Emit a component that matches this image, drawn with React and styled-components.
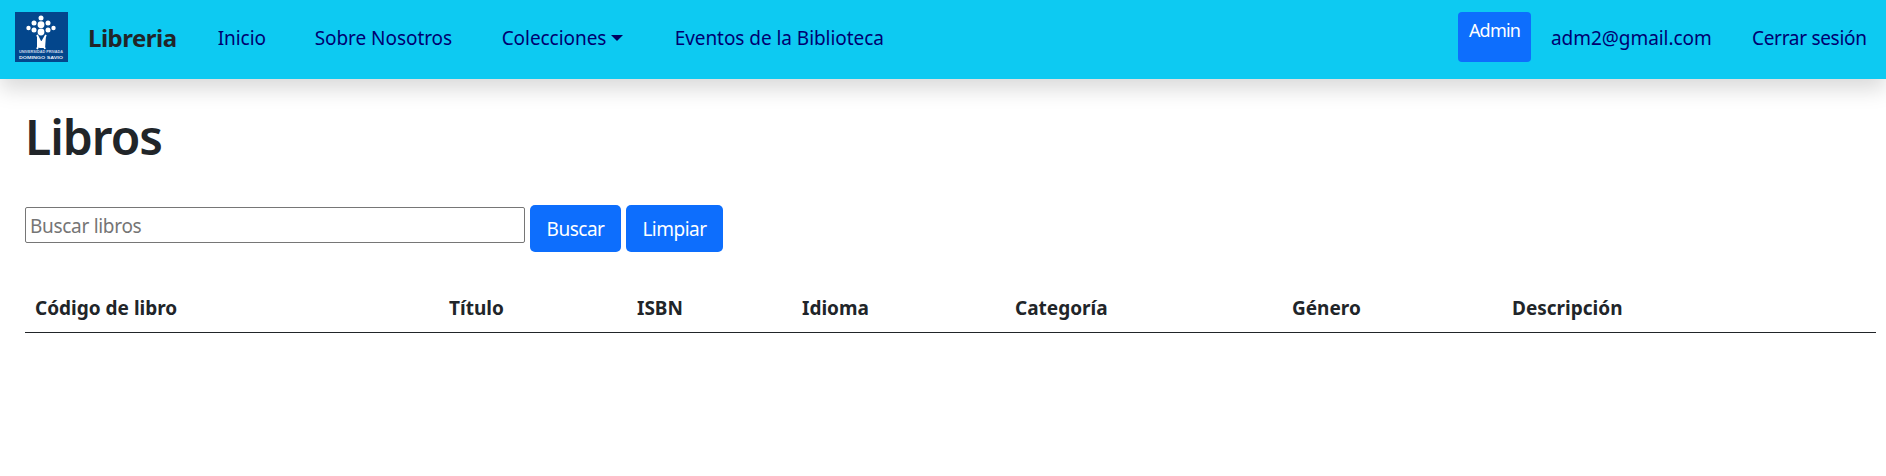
import React from "react";
import styled, { createGlobalStyle } from "styled-components";

const GlobalStyle = createGlobalStyle`
  * { box-sizing: border-box; }
  body {
    margin: 0;
    background: #fff;
    color: #212529;
    font-family: "Noto Sans", "Open Sans", sans-serif;
    font-size: 19px;
    overflow: hidden;
  }
`;

const Navbar = styled.nav`
  display: flex;
  align-items: center;
  height: 79px;
  padding: 0 17px 5px 15px;
  background: #0dcaf2;
  box-shadow: 0 10px 20px rgba(0, 0, 0, 0.15);
`;
const Logo = styled.svg`
  display: block;
  width: 53px;
  height: 50px;
  flex: none;
`;
const Brand = styled.a`
  margin-left: 20px;
  font-size: 24px;
  font-weight: 700;
  letter-spacing: -0.5px;
  color: #212529;
`;
const Links = styled.div`
  display: flex;
  align-items: center;
  margin-left: 41px;
`;
const NavLink = styled.a`
  width: ${(p) => p.$width}px;
  flex: none;
  padding-top: 1px;
  color: #000070;
  font-size: 19px;
  letter-spacing: -0.05px;
  white-space: nowrap;
`;
const Caret = styled.span`
  display: inline-block;
  margin-left: 5px;
  vertical-align: 4px;
  border-top: 6px solid #000060;
  border-left: 6px solid transparent;
  border-right: 6px solid transparent;
`;
const UserArea = styled.div`
  display: flex;
  align-items: center;
  margin-left: auto;
`;
const RoleBadge = styled.span`
  display: block;
  width: 73px;
  height: 50px;
  padding-top: 6px;
  border-radius: 4px;
  background: #0d6efd;
  color: #fff;
  font-size: 18px;
  letter-spacing: -0.8px;
  text-align: center;
`;
const Email = styled(NavLink)`
  margin-left: 20px;
`;
const Logout = styled(NavLink)`
  letter-spacing: -0.3px;
`;
const Main = styled.main`
  padding: 0 10px 0 25px;
`;
const Title = styled.h1`
  margin: 28px 0 0;
  height: 59px;
  font-size: 48px;
  font-weight: 600;
  line-height: 59px;
  letter-spacing: -1px;
`;
const SearchRow = styled.form`
  display: flex;
  align-items: center;
  gap: 5px;
  margin-top: 39px;
`;
const SearchInput = styled.input`
  width: 500px;
  height: 36px;
  margin-top: -8px;
  padding: 2px 4px 0;
  border: 1px solid #767676;
  border-radius: 2px;
  font: inherit;
  font-size: 19px;
  letter-spacing: -0.3px;
  &::placeholder { color: #757575; opacity: 1; }
`;
const Button = styled.button`
  width: ${(p) => p.$width}px;
  height: 47px;
  padding: 0;
  border: 0;
  border-radius: 5px;
  background: #0d6efd;
  color: #fff;
  font: inherit;
  font-size: 19px;
  letter-spacing: -0.5px;
`;
const Table = styled.table`
  width: 100%;
  margin-top: 32px;
  border-collapse: collapse;
  table-layout: fixed;
`;
const HeadCell = styled.th`
  width: ${(p) => p.$width}px;
  height: 48px;
  padding: 0 10px;
  border-bottom: 1px solid #212529;
  font-size: 19px;
  font-weight: 700;
  letter-spacing: 0;
  text-align: left;
`;

const columns = [
  ["Código de libro", 414],
  ["Título", 188],
  ["ISBN", 165],
  ["Idioma", 213],
  ["Categoría", 277],
  ["Género", 220],
  ["Descripción", 374],
];

const SchoolLogo = () => (
  <Logo viewBox="0 0 53 50">
    <rect width="53" height="50" fill="#03468c" />
    <g fill="#fff">
      <circle cx="26" cy="6" r="2.5" />
      <circle cx="19" cy="11" r="2.5" />
      <circle cx="26" cy="12.7" r="3.4" />
      <circle cx="33" cy="11" r="2.5" />
      <circle cx="13.5" cy="16" r="2.2" />
      <circle cx="19" cy="18" r="2.5" />
      <circle cx="33" cy="18" r="2.5" />
      <circle cx="38.5" cy="16" r="2.2" />
      <circle cx="26" cy="20" r="3.4" />
    </g>
    <path d="M22 23 L25.5 30 L22 37 M31 23 L27 30 L30 37 M25 30 H28 V35 H25 Z" fill="#fff" stroke="#fff" strokeWidth="1.8" />
    <text x="4" y="41" textLength="44" lengthAdjust="spacingAndGlyphs" fill="#c8d8ea" fontSize="3" fontWeight="700" fontFamily="Liberation Sans, sans-serif">UNIVERSIDAD PRIVADA</text>
    <text x="4" y="46.5" textLength="44" lengthAdjust="spacingAndGlyphs" fill="#e4edf6" fontSize="3.8" fontWeight="700" fontFamily="Liberation Sans, sans-serif">DOMINGO SAVIO</text>
  </Logo>
);

export default function App() {
  return (
    <>
      <GlobalStyle />
      <Navbar>
        <SchoolLogo />
        <Brand>Libreria</Brand>
        <Links>
          <NavLink $width={97}>Inicio</NavLink>
          <NavLink $width={187}>Sobre Nosotros</NavLink>
          <NavLink $width={173}>
            Colecciones<Caret />
          </NavLink>
          <NavLink $width={220}>Eventos de la Biblioteca</NavLink>
        </Links>
        <UserArea>
          <RoleBadge>Admin</RoleBadge>
          <Email $width={201}>adm2@gmail.com</Email>
          <Logout $width={117}>Cerrar sesión</Logout>
        </UserArea>
      </Navbar>
      <Main>
        <Title>Libros</Title>
        <SearchRow>
          <SearchInput placeholder="Buscar libros" />
          <Button type="button" $width={91}>Buscar</Button>
          <Button type="button" $width={97}>Limpiar</Button>
        </SearchRow>
        <Table>
          <thead>
            <tr>
              {columns.map(([label, width]) => (
                <HeadCell key={label} $width={width}>{label}</HeadCell>
              ))}
            </tr>
          </thead>
        </Table>
      </Main>
    </>
  );
}
